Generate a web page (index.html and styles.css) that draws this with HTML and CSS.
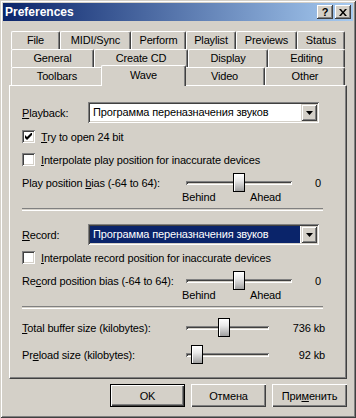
FILE: index.html
```html
<!DOCTYPE html>
<html lang="en">
    <head>
        <meta charset="UTF-8" />
        <meta name="viewport" content="width=device-width, initial-scale=1.0" />
        <title>Preferences</title>
        <link rel="stylesheet" href="styles.css">
    </head>
    <body>
        <div class="window">
            <div class="titlebar">
                <span class="title">Preferences</span>
                <span class="tb-btn help">?</span>
                <span class="tb-btn close">
                    <svg width="8" height="7" viewBox="0 0 8 7"><path d="M0 0h2l2 2.5L6 0h2L5 3.5 8 7H6L4 4.5 2 7H0l3-3.5z" fill="#000"/></svg>
                </span>
            </div>

            <div class="client">
                <div class="tabs">
                    <div class="tab-row">
                        <span class="tab w49">File</span>
                        <span class="tab w71">MIDI/Sync</span>
                        <span class="tab w55">Perform</span>
                        <span class="tab w50">Playlist</span>
                        <span class="tab w61">Previews</span>
                        <span class="tab w48">Status</span>
                    </div>
                    <div class="tab-row">
                        <span class="tab w83">General</span>
                        <span class="tab w94">Create CD</span>
                        <span class="tab w80">Display</span>
                        <span class="tab w77">Editing</span>
                    </div>
                    <div class="tab-row">
                        <span class="tab w92">Toolbars</span>
                        <span class="tab w81 selected">Wave</span>
                        <span class="tab w81">Video</span>
                        <span class="tab w80">Other</span>
                    </div>
                </div>

                <div class="panel">
                    <!-- playback device -->
                    <div class="field-row">
                        <span class="field-label"><u>P</u>layback:</span>
                        <div class="combo">
                            <span class="combo-text">Программа переназначения звуков</span>
                            <span class="combo-btn"><svg width="7" height="4" viewBox="0 0 7 4"><path d="M0 0h7L3.5 4z" fill="#000"/></svg></span>
                        </div>
                    </div>
                    <div class="check-row first">
                        <span class="checkbox"><svg width="7" height="7" viewBox="0 0 7 7"><path d="M0 2v3l2 2 5-5V-1L2 4z" fill="#000"/></svg></span>
                        <span><u>T</u>ry to open 24 bit</span>
                    </div>
                    <div class="check-row">
                        <span class="checkbox"></span>
                        <span><u>I</u>nterpolate play position for inaccurate devices</span>
                    </div>
                    <div class="slider-row">
                        <span class="slider-label">Play position <u>b</u>ias (-64 to 64):</span>
                        <div class="slider wide">
                            <div class="track"></div>
                            <div class="thumb" style="left: 47px"></div>
                        </div>
                        <span class="slider-value bias">0</span>
                    </div>
                    <div class="ticks">
                        <span class="tick-behind">Behind</span>
                        <span>Ahead</span>
                    </div>

                    <div class="sep"></div>

                    <!-- record device -->
                    <div class="field-row record">
                        <span class="field-label"><u>R</u>ecord:</span>
                        <div class="combo focused">
                            <span class="combo-text">Программа переназначения звуков</span>
                            <span class="combo-btn"><svg width="7" height="4" viewBox="0 0 7 4"><path d="M0 0h7L3.5 4z" fill="#000"/></svg></span>
                        </div>
                    </div>
                    <div class="check-row after-record">
                        <span class="checkbox"></span>
                        <span><u>I</u>nterpolate record position for inaccurate devices</span>
                    </div>
                    <div class="slider-row">
                        <span class="slider-label">Re<u>c</u>ord position bias (-64 to 64):</span>
                        <div class="slider wide">
                            <div class="track"></div>
                            <div class="thumb" style="left: 47px"></div>
                        </div>
                        <span class="slider-value bias">0</span>
                    </div>
                    <div class="ticks">
                        <span class="tick-behind">Behind</span>
                        <span>Ahead</span>
                    </div>

                    <div class="sep"></div>

                    <!-- buffers -->
                    <div class="slider-row buffer">
                        <span class="slider-label"><u>T</u>otal buffer size (kilobytes):</span>
                        <div class="slider narrow">
                            <div class="track"></div>
                            <div class="thumb" style="left: 32px"></div>
                        </div>
                        <span class="slider-value">736 kb</span>
                    </div>
                    <div class="slider-row buffer">
                        <span class="slider-label">Pr<u>e</u>load size (kilobytes):</span>
                        <div class="slider narrow">
                            <div class="track"></div>
                            <div class="thumb" style="left: 5px"></div>
                        </div>
                        <span class="slider-value">92 kb</span>
                    </div>
                </div>

                <div class="buttons">
                    <span class="btn default">OK</span>
                    <span class="btn">Отмена</span>
                    <span class="btn">При<u>м</u>енить</span>
                </div>
            </div>
        </div>
    </body>
</html>
```

FILE: styles.css
```css
body {
    margin: 0;
    font-family: "Liberation Sans", Arial, sans-serif;
    font-size: 11px;
    letter-spacing: -0.15px;
    color: #000;
    background: #d4d0c8;
}

.window {
    width: 356px;
    height: 418px;
    box-sizing: border-box;
    padding: 3px;
    background: #d4d0c8;
    box-shadow: inset 1px 1px 0 #d4d0c8, inset -1px -1px 0 #404040,
        inset 2px 2px 0 #fff, inset -2px -2px 0 #808080;
}

/* title bar */
.titlebar {
    height: 18px;
    display: flex;
    align-items: center;
    padding: 0 2px 0 2px;
    background: linear-gradient(to right, #0a246a, #a6caf0);
}
.title {
    flex: 1;
    color: #fff;
    font-weight: bold;
    font-size: 12px;
    letter-spacing: 0;
}
.tb-btn {
    width: 16px;
    height: 14px;
    box-sizing: border-box;
    display: flex;
    align-items: center;
    justify-content: center;
    background: #d4d0c8;
    box-shadow: inset -1px -1px 0 #404040, inset 1px 1px 0 #fff,
        inset -2px -2px 0 #808080;
    font-weight: bold;
    font-size: 11px;
    line-height: 14px;
}
.tb-btn.help {
    margin-right: 2px;
}

.client {
    padding: 10px 6px 0 6px;
}

/* tabs */
.tabs {
    margin: 0 2px;
}
.tab-row {
    display: flex;
    height: 18px;
}
.tab {
    flex: none;
    box-sizing: border-box;
    height: 18px;
    text-align: center;
    line-height: 17px;
    background: #d4d0c8;
    border-top: 1px solid #fff;
    border-left: 1px solid #fff;
    border-right: 1px solid #404040;
    box-shadow: inset -1px 0 0 #808080;
    border-radius: 2px 2px 0 0;
}
.tab.selected {
    position: relative;
    z-index: 1;
    height: 21px;
    margin: -2px -2px -1px -2px;
    width: 85px;
    line-height: 18px;
}
.w48 { width: 48px; }
.w49 { width: 49px; }
.w50 { width: 50px; }
.w55 { width: 55px; }
.w61 { width: 61px; }
.w71 { width: 71px; }
.w77 { width: 77px; }
.w80 { width: 80px; }
.w81 { width: 81px; }
.w83 { width: 83px; }
.w92 { width: 92px; }
.w94 { width: 94px; }

/* panel */
.panel {
    box-sizing: border-box;
    height: 294px;
    padding: 16px 21px 0 12px;
    border-top: 1px solid #fff;
    border-left: 1px solid #fff;
    border-right: 1px solid #404040;
    border-bottom: 1px solid #404040;
    box-shadow: inset -1px -1px 0 #808080;
}

.field-row {
    display: flex;
    align-items: center;
    height: 21px;
}
.field-row.record {
    margin-top: 13px;
}
.field-label {
    width: 66px;
}

.combo {
    width: 231px;
    height: 21px;
    box-sizing: border-box;
    padding: 2px;
    display: flex;
    background: #fff;
    box-shadow: inset 1px 1px 0 #808080, inset -1px -1px 0 #fff,
        inset 2px 2px 0 #404040, inset -2px -2px 0 #d4d0c8;
}
.combo-text {
    flex: 1;
    padding-left: 3px;
    line-height: 17px;
    white-space: nowrap;
    overflow: hidden;
}
.combo.focused .combo-text {
    background: #0a246a;
    color: #fff;
    margin-right: 1px;
}
.combo-btn {
    width: 16px;
    height: 17px;
    box-sizing: border-box;
    display: flex;
    align-items: center;
    justify-content: center;
    background: #d4d0c8;
    box-shadow: inset 1px 1px 0 #d4d0c8, inset -1px -1px 0 #404040,
        inset 2px 2px 0 #fff, inset -2px -2px 0 #808080;
}

.check-row {
    display: flex;
    align-items: center;
    height: 13px;
    margin-top: 10px;
}
.check-row.first {
    margin-top: 7px;
}
.check-row.after-record {
    margin-top: 6px;
}
.checkbox {
    width: 13px;
    height: 13px;
    box-sizing: border-box;
    margin-right: 6px;
    display: flex;
    align-items: center;
    justify-content: center;
    background: #fff;
    box-shadow: inset 1px 1px 0 #808080, inset -1px -1px 0 #fff,
        inset 2px 2px 0 #404040, inset -2px -2px 0 #d4d0c8;
}

/* sliders */
.slider-row {
    display: flex;
    align-items: center;
    height: 19px;
    margin-top: 7px;
}
.slider-row.buffer {
    margin-top: 9px;
}
.slider-row.buffer + .slider-row.buffer {
    margin-top: 8px;
}
.slider-label {
    width: 164px;
    flex: none;
}
.slider {
    position: relative;
    height: 19px;
    display: flex;
    align-items: center;
}
.slider.wide {
    width: 106px;
}
.slider.narrow {
    width: 83px;
}
.track {
    width: 100%;
    height: 4px;
    box-sizing: border-box;
    background: #d4d0c8;
    box-shadow: inset 1px 1px 0 #808080, inset -1px -1px 0 #fff,
        inset 2px 2px 0 #404040;
}
.thumb {
    position: absolute;
    top: 0;
    width: 12px;
    height: 19px;
    box-sizing: border-box;
    border: 1px solid #000;
    background: linear-gradient(to bottom, #fff, #e8e8e8 40%, #a0a0a0);
    box-shadow: inset 1px 1px 0 #fff;
}
.slider-value {
    margin-left: auto;
}
.slider-value.bias {
    padding-right: 4px;
}

.ticks {
    display: flex;
    height: 11px;
    line-height: 11px;
    padding-left: 160px;
}
.tick-behind {
    width: 68px;
}

.sep {
    width: 301px;
    height: 1px;
    border-top: 1px solid #808080;
    border-bottom: 1px solid #fff;
    margin-top: 5px;
}

/* dialog buttons */
.buttons {
    display: flex;
    justify-content: flex-end;
    gap: 6px;
    margin-top: 5px;
}
.btn {
    width: 75px;
    height: 23px;
    box-sizing: border-box;
    display: flex;
    align-items: center;
    justify-content: center;
    background: #d4d0c8;
    box-shadow: inset 1px 1px 0 #fff, inset -1px -1px 0 #404040,
        inset -2px -2px 0 #808080;
}
.btn.default {
    border: 1px solid #000;
    box-shadow: inset 1px 1px 0 #fff, inset -1px -1px 0 #404040,
        inset -2px -2px 0 #808080;
}
```
